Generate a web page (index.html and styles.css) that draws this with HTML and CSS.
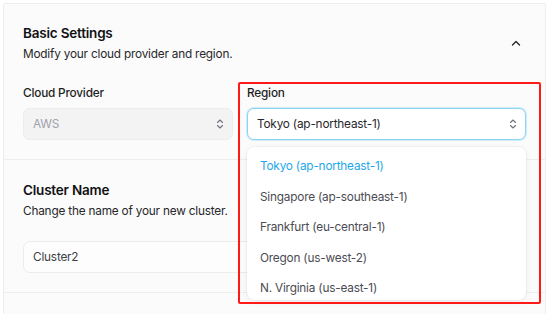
FILE: index.html
```html
<!DOCTYPE html>
<html>
<head>
<meta charset="utf-8">
<link rel="stylesheet" href="styles.css">
</head>
<body>
<div class="card">
  <section class="section">
    <div class="sec-head">
      <div>
        <h2 class="title">Basic Settings</h2>
        <p class="desc">Modify your cloud provider and region.</p>
      </div>
      <svg class="collapse" width="12" height="8" viewBox="0 0 12 8"><path d="M2.5 6 L6 2.5 L9.5 6" fill="none" stroke="#27272a" stroke-width="1.4" stroke-linecap="round" stroke-linejoin="round"/></svg>
    </div>
    <div class="fields">
      <div class="field">
        <label class="label">Cloud Provider</label>
        <div class="select disabled">
          <span>AWS</span>
          <svg class="updown" width="8" height="12" viewBox="0 0 8 12"><path d="M1.5 4.5 L4 2 L6.5 4.5 M1.5 7.5 L4 10 L6.5 7.5" fill="none" stroke="#71717a" stroke-width="1.1" stroke-linecap="round" stroke-linejoin="round"/></svg>
        </div>
      </div>
      <div class="field region">
        <label class="label">Region</label>
        <div class="select focused">
          <span>Tokyo (ap-northeast-1)</span>
          <svg class="updown" width="8" height="12" viewBox="0 0 8 12"><path d="M1.5 4.5 L4 2 L6.5 4.5 M1.5 7.5 L4 10 L6.5 7.5" fill="none" stroke="#71717a" stroke-width="1.1" stroke-linecap="round" stroke-linejoin="round"/></svg>
        </div>
        <ul class="menu">
          <li class="opt active">Tokyo (ap-northeast-1)</li>
          <li class="opt">Singapore (ap-southeast-1)</li>
          <li class="opt">Frankfurt (eu-central-1)</li>
          <li class="opt">Oregon (us-west-2)</li>
          <li class="opt">N. Virginia (us-east-1)</li>
        </ul>
      </div>
    </div>
  </section>
  <section class="section">
    <h2 class="title">Cluster Name</h2>
    <p class="desc">Change the name of your new cluster.</p>
    <div class="input">Cluster2</div>
  </section>
  <section class="section empty"></section>
</div>
<div class="highlight"></div>
</body>
</html>
```

FILE: styles.css
```css
* { box-sizing: border-box; }
html, body { margin: 0; padding: 0; }
body {
  width: 554px;
  height: 314px;
  overflow: hidden;
  background: #ffffff;
  font-family: Inter, "Noto Sans", sans-serif;
  position: relative;
}
.card {
  margin: 3px 0 0 3px;
  width: 543px;
  height: 320px;
  background: #fbfbfb;
  border: 1px solid #eeeeee;
  border-radius: 2px;
}
.section {
  padding: 19px 19px 19px 19px;
  border-bottom: 1px solid #eeeeee;
}
.section + .section { padding-top: 20px; padding-bottom: 19px; }
.section.empty { height: 20px; border-bottom: none; }
.sec-head {
  display: flex;
  align-items: center;
  justify-content: space-between;
  padding-right: 4px;
}
.title {
  margin: 0;
  font-size: 13.5px;
  line-height: 20px;
  font-weight: 600;
  letter-spacing: -0.2px;
  color: #111113;
}
.desc {
  margin: 1px 0 0;
  font-size: 11.8px;
  letter-spacing: -0.2px;
  line-height: 20px;
  color: #27272a;
}
.collapse { display: block; margin-top: -2px; }
.fields {
  display: grid;
  grid-template-columns: 210px 279px;
  column-gap: 14px;
  margin-top: 20px;
}
.field { display: flex; flex-direction: column; gap: 6px; }
.region { position: relative; }
.label {
  font-size: 11.8px;
  letter-spacing: -0.2px;
  line-height: 18px;
  color: #1f1f23;
  font-weight: 500;
}
.select {
  height: 32px;
  border-radius: 7px;
  display: flex;
  align-items: center;
  justify-content: space-between;
  padding: 0 8px 0 9px;
  font-size: 11.8px;
  letter-spacing: -0.2px;
  color: #27272a;
}
.select.disabled {
  background: #f3f3f4;
  border: 1px solid #ececec;
  color: #a1a1aa;
}
.select.focused {
  background: #ffffff;
  border: 1px solid #8fd3f5;
  box-shadow: 0 0 0 1px #cdebfa;
}
.updown { display: block; }
.menu {
  position: absolute;
  left: 0;
  top: 63px;
  width: 279px;
  height: 153px;
  margin: 0;
  padding: 4px 0;
  list-style: none;
  background: #ffffff;
  border-radius: 8px;
  box-shadow: 0 2px 8px rgba(0,0,0,0.06), 0 0 0 1px rgba(0,0,0,0.03);
  overflow: hidden;
  z-index: 2;
}
.opt {
  height: 30.5px;
  display: flex;
  align-items: center;
  padding-left: 13px;
  font-size: 11.8px;
  letter-spacing: -0.2px;
  color: #4b4b53;
}
.opt.active { color: #1ea7ea; }
.input {
  margin-top: 20px;
  height: 32px;
  border: 1px solid #ececec;
  border-radius: 7px;
  background: #fdfdfd;
  display: flex;
  align-items: center;
  padding-left: 9px;
  font-size: 11.8px;
  letter-spacing: -0.2px;
  color: #3f3f46;
  width: 503px;
}
.highlight {
  position: absolute;
  left: 238px;
  top: 82px;
  width: 303px;
  height: 222px;
  border: 2.5px solid #ff1a1a;
  border-radius: 2px;
  z-index: 3;
}
```
